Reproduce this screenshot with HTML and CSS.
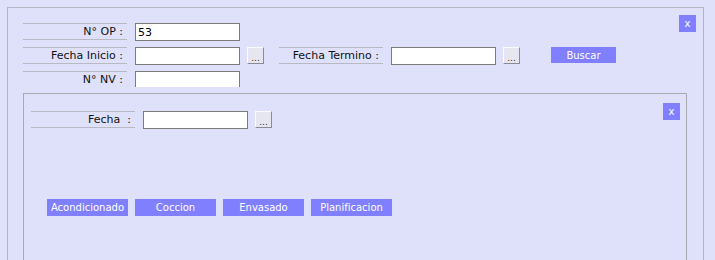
FILE: index.html
```html
<!DOCTYPE html>
<html lang="es">
<head>
    <meta charset="UTF-8">
    <title>Ordenes de Produccion</title>
    <link rel="stylesheet" href="styles.css">
</head>
<body>

<div class="panel">
    <button class="close" type="button">x</button>

    <div class="row">
        <label class="caption" for="op">N° OP :</label>
        <input class="field" type="text" id="op" value="53">
    </div>
    <div class="row">
        <label class="caption" for="inicio">Fecha Inicio :</label>
        <input class="field" type="text" id="inicio">
        <button class="pick" type="button">...</button>
        <label class="caption caption-2" for="termino">Fecha Termino :</label>
        <input class="field" type="text" id="termino">
        <button class="pick" type="button">...</button>
        <button class="action buscar" type="button">Buscar</button>
    </div>
    <div class="row row-cut">
        <label class="caption" for="nv">N° NV :</label>
        <input class="field" type="text" id="nv">
    </div>

    <div class="panel inner">
        <button class="close" type="button">x</button>
        <div class="row">
            <label class="caption" for="fecha">Fecha&nbsp; :</label>
            <input class="field" type="text" id="fecha">
            <button class="pick" type="button">...</button>
        </div>
        <div class="actions">
            <button class="action" type="button">Acondicionado</button>
            <button class="action" type="button">Coccion</button>
            <button class="action" type="button">Envasado</button>
            <button class="action" type="button">Planificacion</button>
        </div>
    </div>
</div>

</body>
</html>
```

FILE: styles.css
```css
body {
    margin: 0;
    padding: 7px;
    background: #dfe1fb;
    font-family: "DejaVu Sans", Verdana, sans-serif;
    font-size: 11px;
    color: #000;
    height: 260px;
    box-sizing: border-box;
    overflow: hidden;
}
.panel {
    position: relative;
    border: 1px solid #b4b4c4;
    border-bottom: none;
    padding: 15px 0 0 15px;
    width: 680px;
    height: 237px;
}
.panel.inner {
    margin-top: 6px;
    padding: 17px 0 0 7px;
    width: 655px;
    height: 149px;
    border-color: #a8a8b0;
}
.close {
    position: absolute;
    top: 7px;
    right: 7px;
    width: 17px;
    height: 17px;
    padding: 0;
    border: none;
    background: #8080ff;
    color: #fff;
    font-family: inherit;
    font-size: 10px;
    line-height: 15px;
}
.inner .close {
    top: 9px;
    right: 6px;
}
.row {
    display: flex;
    align-items: flex-start;
    height: 24px;
}
.row-cut {
    height: 16px;
    overflow: hidden;
}
.caption {
    width: 100px;
    height: 15px;
    border-top: 1px solid #b9b9c6;
    border-bottom: 1px solid #b9b9c6;
    text-align: right;
    line-height: 15px;
    padding-right: 4px;
    margin-right: 4px;
    color: #111;
}
.caption-2 {
    margin-left: 15px;
}
.field {
    width: 105px;
    height: 18px;
    box-sizing: border-box;
    border: 1px solid #7b7b7b;
    background: #fff;
    padding: 0 2px;
    margin: 0 0 0 4px;
    font-family: inherit;
    font-size: 11px;
    outline: none;
}
.pick {
    width: 17px;
    height: 17px;
    margin-left: 7px;
    padding: 4px 0 0;
    border: 1px solid #fbfbff;
    border-right-color: #8a8a94;
    border-bottom-color: #8a8a94;
    background: #e6e6f0;
    font-family: inherit;
    font-size: 9px;
    line-height: 10px;
    color: #333;
}
.action {
    width: 81px;
    height: 17px;
    padding: 0;
    border: none;
    background: #8080ff;
    color: #fff;
    font-family: inherit;
    font-size: 10px;
    line-height: 13px;
}
.buscar {
    width: 65px;
    height: 16px;
    margin-left: 31px;
}
.actions {
    display: flex;
    gap: 7px;
    margin: 64px 0 0 16px;
}
```
